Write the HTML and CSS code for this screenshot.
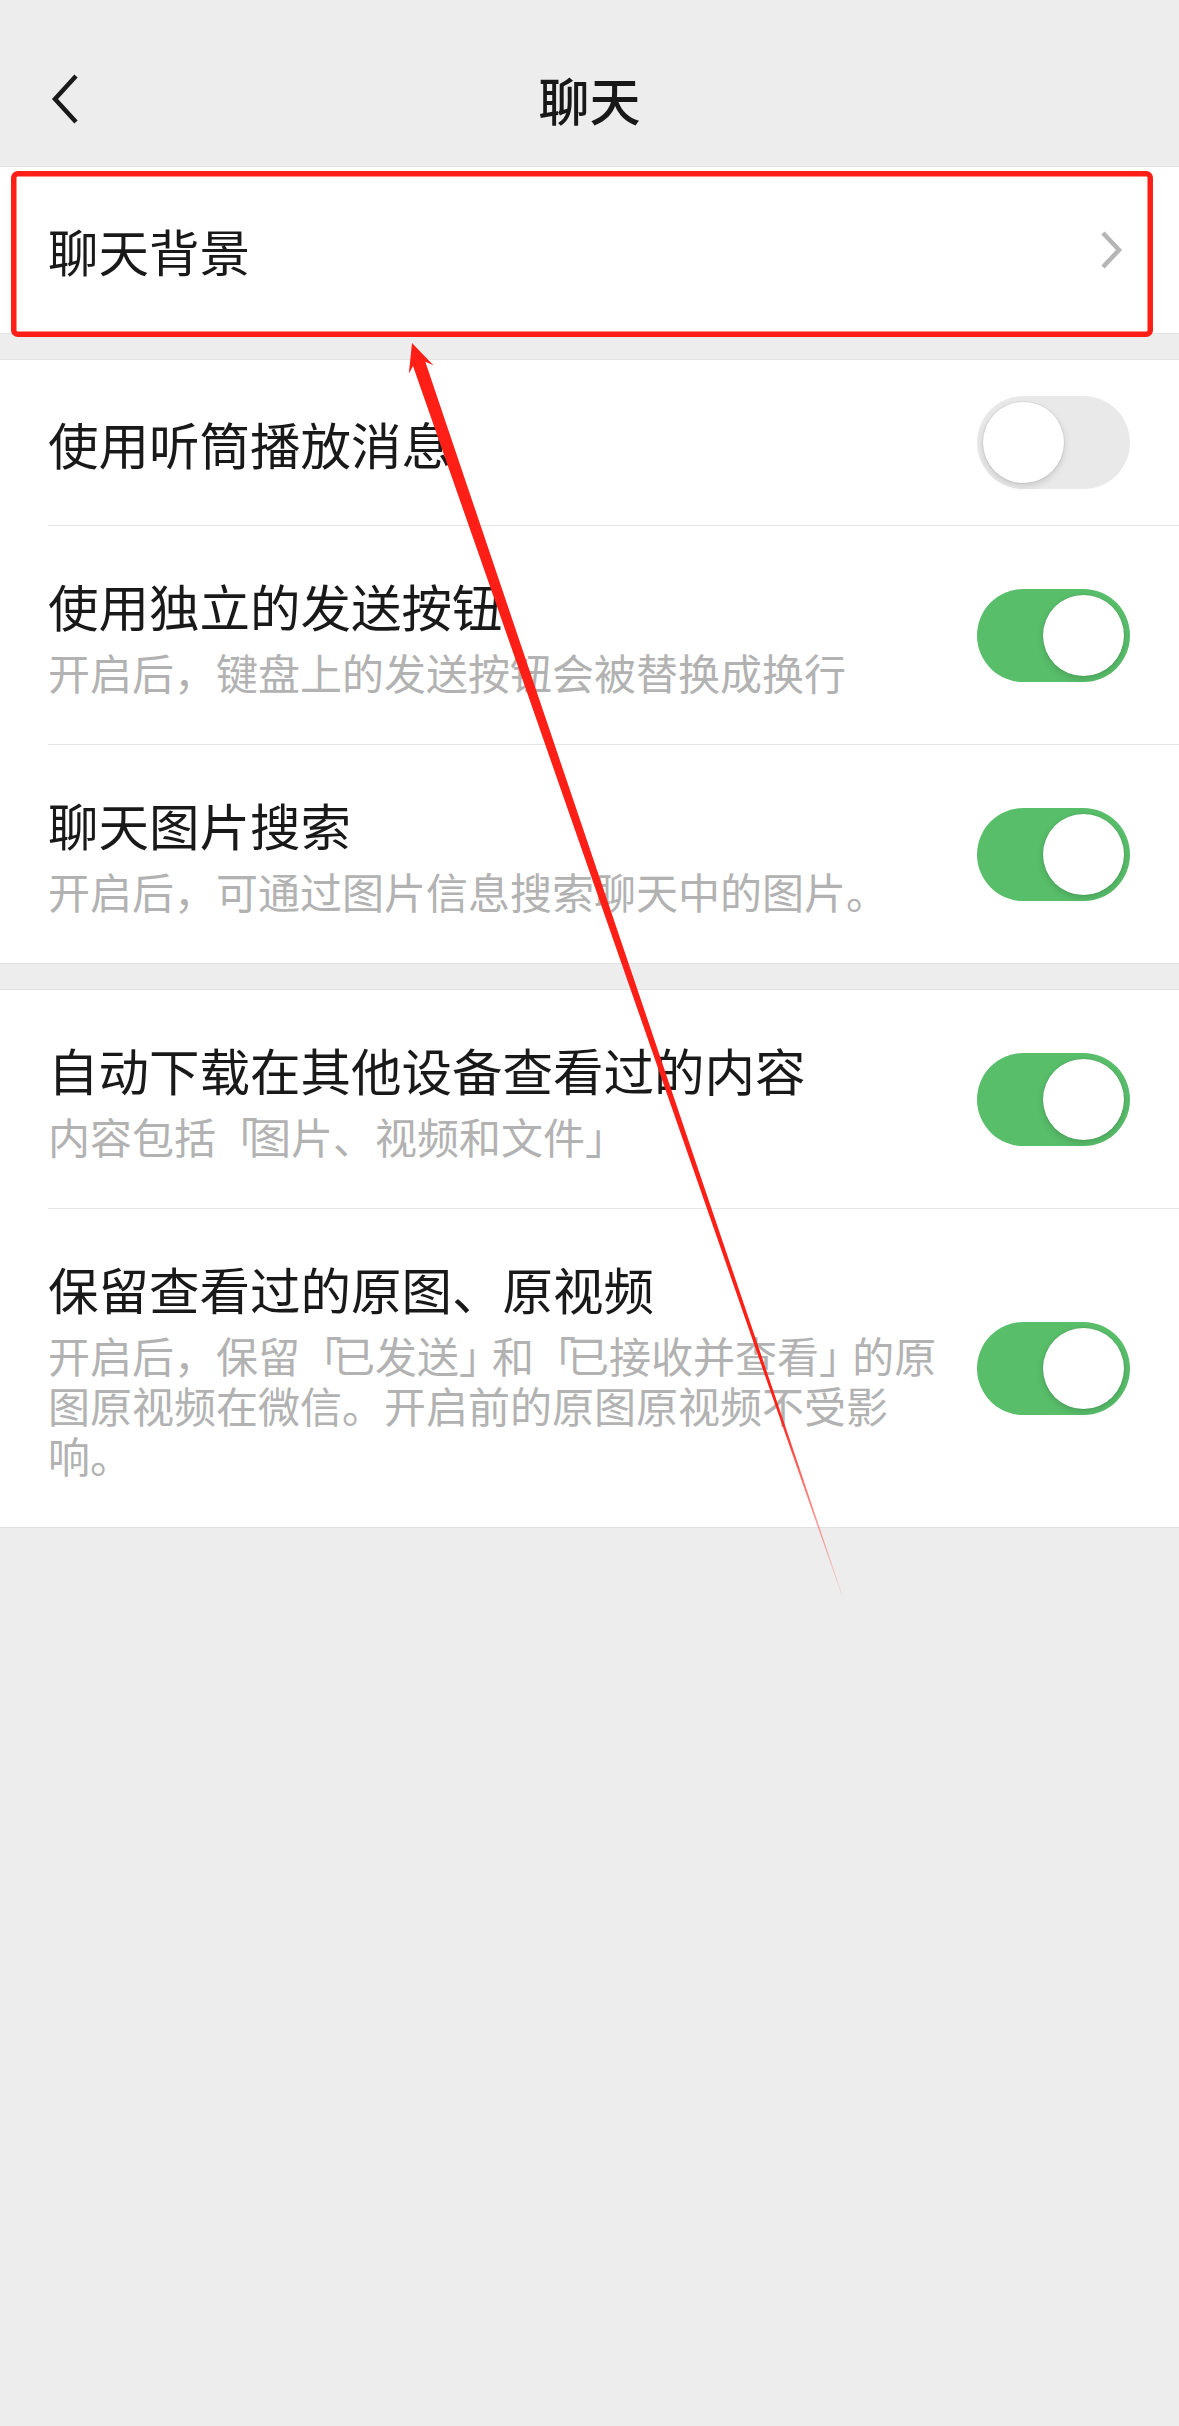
FILE: index.html
```html
<!DOCTYPE html>
<html lang="zh-CN">
<head>
    <meta charset="UTF-8">
    <meta name="viewport" content="width=device-width, initial-scale=1.0">
    <title>聊天</title>
    <link rel="stylesheet" href="styles.css">
</head>
<body>
    <div class="page">
        <header class="nav">
            <span class="nav-back">
                <svg width="30" height="52" viewBox="0 0 30 52">
                    <polyline points="26,3 5,26 26,49" fill="none" stroke="#1a1a1a" stroke-width="4.5" stroke-linejoin="miter"/>
                </svg>
            </span>
            <h1 class="nav-title">聊天</h1>
            <span></span>
        </header>

        <section class="group">
            <div class="cell cell-tall">
                <div class="cell-body">
                    <div class="cell-title">聊天背景</div>
                </div>
                <svg class="cell-arrow" width="26" height="42" viewBox="0 0 26 42">
                    <polyline points="4,4 20,21 4,38" fill="none" stroke="#b5b5b5" stroke-width="4.5"/>
                </svg>
            </div>
        </section>

        <section class="group">
            <div class="cell">
                <div class="cell-body">
                    <div class="cell-title">使用听筒播放消息</div>
                </div>
                <div class="switch"><span class="knob"></span></div>
            </div>
            <div class="cell">
                <div class="cell-body">
                    <div class="cell-title">使用独立的发送按钮</div>
                    <div class="cell-desc">开启后，键盘上的发送按钮会被替换成换行</div>
                </div>
                <div class="switch on"><span class="knob"></span></div>
            </div>
            <div class="cell">
                <div class="cell-body">
                    <div class="cell-title">聊天图片搜索</div>
                    <div class="cell-desc">开启后，可通过图片信息搜索聊天中的图片。</div>
                </div>
                <div class="switch on"><span class="knob"></span></div>
            </div>
        </section>

        <section class="group">
            <div class="cell">
                <div class="cell-body">
                    <div class="cell-title">自动下载在其他设备查看过的内容</div>
                    <div class="cell-desc">内容包括<span class="bracket">「</span>图片、视频和文件<span class="bracket">」</span></div>
                </div>
                <div class="switch on"><span class="knob"></span></div>
            </div>
            <div class="cell">
                <div class="cell-body">
                    <div class="cell-title">保留查看过的原图、原视频</div>
                    <div class="cell-desc nowrap">开启后，保留<span class="bracket">「</span>已发送<span class="bracket">」</span>和<span class="bracket">「</span>已接收并查看<span class="bracket">」</span>的原<br>图原视频在微信。开启前的原图原视频不受影<br>响。</div>
                </div>
                <div class="switch on"><span class="knob"></span></div>
            </div>
        </section>

        <!-- red annotation drawn over the screenshot -->
        <svg class="markup" width="1179" height="2426" viewBox="0 0 1179 2426">
            <defs>
                <linearGradient id="fade" gradientUnits="userSpaceOnUse" x1="412" y1="343" x2="842" y2="1595">
                    <stop offset="0" stop-color="#ff1f17"/>
                    <stop offset="0.85" stop-color="#ff1f17"/>
                    <stop offset="1" stop-color="#ff1f17" stop-opacity="0.1"/>
                </linearGradient>
            </defs>
            <rect x="13.75" y="173.75" width="1136.5" height="160.5" rx="4" fill="none" stroke="#ff1f17" stroke-width="5.5"/>
            <polygon fill="url(#fade)" points="412,343 433.4,365.3 425.3,361.7 546.2,719.8 706.4,1193.5 786.7,1430.3 842.4,1595.1 841.6,1595.3 784.3,1431.1 702.2,1194.9 537.6,722.8 413,365.9 408.8,373.7"/>
        </svg>
    </div>
</body>
</html>
```

FILE: styles.css
```css
html {
    background-color: #ededed;
}
body {
    margin: 0;
    font-family: "Noto Sans CJK SC", "Noto Sans", sans-serif;
    color: #191919;
}
.page {
    position: relative;
    width: 1179px;
    min-height: 2426px;
    background-color: #ededed;
}
.nav {
    height: 166px;
    padding-top: 32px;
    box-sizing: border-box;
    display: grid;
    grid-template-columns: 1fr auto 1fr;
    align-items: center;
}
.nav-back {
    padding-left: 50px;
    display: flex;
}
.nav-title {
    margin: 0;
    font-size: 51px;
    font-weight: 500;
    line-height: 64px;
    color: #181818;
}
.group {
    background: white;
    border-top: 1px solid #e1e1e1;
    border-bottom: 1px solid #e1e1e1;
}
.group + .group {
    margin-top: 25px;
}
.cell {
    display: flex;
    align-items: center;
    min-height: 165px;
    margin-left: 48px;
    padding-right: 49px;
    box-sizing: border-box;
}
.cell-tall {
    min-height: 166px;
}
.cell + .cell {
    border-top: 1px solid #e5e5e5;
}
.cell-body {
    flex: 1;
    min-width: 0;
    padding: 47px 0;
}
.cell-title {
    font-size: 50.5px;
    line-height: 64px;
}
.cell-desc {
    margin-top: 10px;
    font-size: 42px;
    line-height: 50px;
    color: #b2b2b2;
}
.bracket {
    letter-spacing: -9px;
}
.nowrap {
    white-space: nowrap;
}
.cell-arrow {
    margin-right: 5px;
}
.switch {
    flex-shrink: 0;
    width: 153px;
    height: 93px;
    padding: 6px;
    box-sizing: border-box;
    border-radius: 47px;
    background-color: #e9e9e9;
    display: flex;
    justify-content: flex-start;
}
.switch.on {
    background-color: #58be6a;
    justify-content: flex-end;
}
.knob {
    width: 81px;
    height: 81px;
    border-radius: 50%;
    background: white;
    box-shadow: 0 3px 7px rgba(0, 0, 0, 0.14), 0 0 0 1px rgba(0, 0, 0, 0.05);
}
.markup {
    position: absolute;
    top: 0;
    left: 0;
    pointer-events: none;
}
```
